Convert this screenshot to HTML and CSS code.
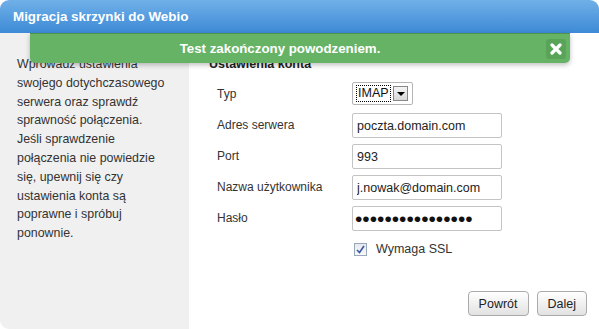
FILE: index.html
```html
<!DOCTYPE html>
<html lang="pl">
<head>
    <meta charset="UTF-8">
    <title>Migracja skrzynki do Webio</title>
    <link rel="stylesheet" href="styles.css">
</head>
<body>
    <div class="window">
        <div class="header">Migracja skrzynki do Webio</div>
        <div class="content">
            <div class="sidebar">
                Wprowadź ustawienia swojego dotychczasowego serwera oraz sprawdź sprawność połączenia. Jeśli sprawdzenie połączenia nie powiedzie się, upewnij się czy ustawienia konta są poprawne i spróbuj ponownie.
            </div>
            <div class="main">
                <h2>Ustawienia konta</h2>
                <div class="form">
                    <label>Typ</label>
                    <div class="select"><span class="select-value">IMAP</span><span class="select-arrow"></span></div>
                    <label>Adres serwera</label>
                    <input type="text" value="poczta.domain.com">
                    <label>Port</label>
                    <input type="text" value="993">
                    <label>Nazwa użytkownika</label>
                    <input type="text" value="j.nowak@domain.com">
                    <label>Hasło</label>
                    <input type="password" class="password" value="1234567890123456">
                    <span></span>
                    <div class="check"><span class="checkbox">
                        <svg width="9" height="9" viewBox="0 0 9 9"><path d="M1 5 L3.5 7.5 L8 1" fill="none" stroke="#3a57a8" stroke-width="1.6"/></svg>
                    </span>Wymaga SSL</div>
                </div>
                <div class="buttons">
                    <button>Powrót</button>
                    <button>Dalej</button>
                </div>
            </div>
        </div>
        <div class="notice">
            <span class="notice-text">Test zakończony powodzeniem.</span>
            <span class="notice-close">
                <svg width="12" height="12" viewBox="0 0 12 12"><path d="M2 2 L10 10 M10 2 L2 10" stroke="#fff" stroke-width="3.2" stroke-linecap="round"/></svg>
            </span>
        </div>
    </div>
</body>
</html>
```

FILE: styles.css
```css
body {
    margin: 0;
    background: #ffffff;
    font-family: 'Liberation Sans', Arial, sans-serif;
}
.window {
    width: 599px;
    height: 329px;
    position: relative;
    border-radius: 9px;
    overflow: hidden;
    background: #ffffff;
    display: flex;
    flex-direction: column;
}
.header {
    height: 33px;
    line-height: 33px;
    padding-left: 13px;
    color: #ffffff;
    font-weight: bold;
    font-size: 13.4px;
    background: linear-gradient(#70b0e8, #3d8ad6);
    flex-shrink: 0;
}
.content {
    flex: 1;
    display: flex;
}
.sidebar {
    width: 149px;
    background: #f0f0f0;
    padding: 22px 23px 0 17px;
    font-size: 12.4px;
    line-height: 18.8px;
    color: #333333;
}
.main {
    flex: 1;
    padding: 24px 0 0 20px;
    display: flex;
    flex-direction: column;
}
h2 {
    margin: 0 0 10px 0;
    font-size: 12.5px;
    line-height: 15px;
    font-weight: bold;
    color: #222222;
}
.form {
    display: grid;
    grid-template-columns: 135px 150px;
    row-gap: 6px;
    padding-left: 8px;
}
label {
    font-size: 12px;
    color: #333333;
    line-height: 25px;
}
input {
    width: 150px;
    height: 25px;
    box-sizing: border-box;
    border: 1px solid #c4c4c4;
    border-radius: 2px;
    padding: 0 4px;
    font-family: 'Liberation Sans', Arial, sans-serif;
    font-size: 12.5px;
    color: #222222;
}
.password {
    font-size: 21px;
    padding: 0 2px;
    color: #111111;
}
.select {
    width: 61px;
    height: 23px;
    box-sizing: border-box;
    border: 1px solid #b5b5b5;
    border-radius: 2px;
    display: flex;
    align-items: center;
    padding: 0 3px;
    gap: 2px;
}
.select-value {
    border: 1px dotted #000000;
    font-size: 12.5px;
    line-height: 15px;
    padding: 0 1px;
    color: #111111;
}
.select-arrow {
    width: 15px;
    height: 15px;
    box-sizing: border-box;
    border: 1px solid #888888;
    background: linear-gradient(#f4f4f4, #d8d8d8);
    position: relative;
}
.select-arrow::after {
    content: "";
    position: absolute;
    left: 3px;
    top: 5px;
    border-left: 4px solid transparent;
    border-right: 4px solid transparent;
    border-top: 4px solid #000000;
}
.check {
    display: flex;
    align-items: center;
    gap: 9px;
    font-size: 12.5px;
    color: #333333;
    padding: 5px 0 0 2px;
}
.checkbox {
    width: 11px;
    height: 11px;
    border: 1px solid #9aa8bc;
    background: linear-gradient(#e6e9ee, #f8f8f8);
    display: flex;
    align-items: center;
    justify-content: center;
}
.buttons {
    margin-top: auto;
    margin-bottom: 13px;
    display: flex;
    justify-content: flex-end;
    gap: 8px;
    padding-right: 12px;
}
button {
    height: 25px;
    padding: 0 10px;
    border: 1px solid #aaaaaa;
    border-radius: 4px;
    background: linear-gradient(#ffffff, #e2e2e2);
    font-family: 'Liberation Sans', Arial, sans-serif;
    font-size: 12.5px;
    color: #222222;
}
.notice {
    position: absolute;
    left: 30px;
    top: 33px;
    width: 540px;
    height: 30px;
    box-sizing: border-box;
    background: #66b366;
    border-top: 1px solid #4e944e;
    border-radius: 0 0 5px 5px;
    box-shadow: 0 2px 5px rgba(0, 0, 0, 0.25);
    display: flex;
    align-items: center;
    padding-right: 4px;
}
.notice-text {
    flex: 1;
    text-align: center;
    color: #ffffff;
    font-weight: bold;
    font-size: 13.3px;
    margin-right: 16px;
}
.notice-close {
    width: 20px;
    height: 20px;
    border-radius: 3px;
    background: #5aa45a;
    display: flex;
    align-items: center;
    justify-content: center;
}
```
